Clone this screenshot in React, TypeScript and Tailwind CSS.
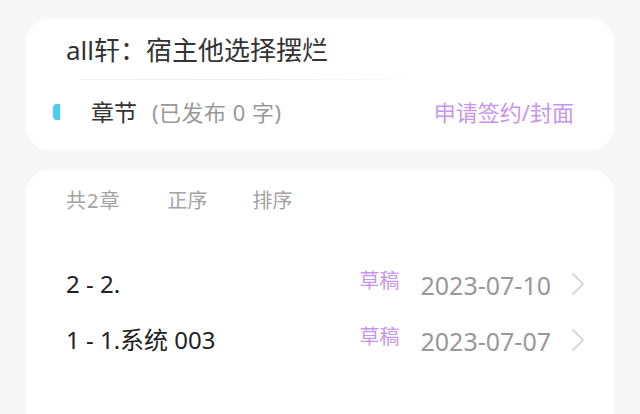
const font = {
  fontFamily: '"Noto Sans", "Noto Sans CJK SC", sans-serif',
};

function Chevron() {
  return (
    <svg width="14" height="24" viewBox="0 0 14 24" fill="none">
      <path
        d="M2 2 L12 12 L2 22"
        stroke="#d9d9d9"
        strokeWidth="2.2"
        strokeLinecap="round"
        strokeLinejoin="round"
      />
    </svg>
  );
}

function App() {
  const chapters = [
    { title: "2 - 2.", date: "2023-07-10" },
    { title: "1 - 1.系统 003", date: "2023-07-07" },
  ];

  return (
    <div
      className="min-h-screen bg-[#f7f7f7] px-[26px] pt-[19px] overflow-hidden"
      style={font}
    >
      <div className="bg-white rounded-[24px] h-[131px]">
        <div className="pl-[40px] pt-[16px] text-[26px] leading-[30px] text-[#333]">
          all轩：宿主他选择摆烂
        </div>
        <div className="ml-[54px] mr-[184px] mt-[14px] h-[1px] bg-gradient-to-r from-[#f0f0f0] via-[#ececec] to-transparent"></div>
        <div className="flex items-center justify-between pl-[27px] pr-[40px] mt-[12px] h-[40px]">
          <div className="flex items-center">
            <span className="w-[7px] h-[16px] rounded-l-[4px] bg-[#45cff2]"></span>
            <span className="ml-[31px] text-[23px] text-[#333]">章节</span>
            <span className="ml-[15px] text-[22px] tracking-[0.5px] text-[#999]">(已发布 0 字)</span>
          </div>
          <span className="text-[22px] text-[#c795ef]">申请签约/封面</span>
        </div>
      </div>

      <div className="bg-white rounded-t-[24px] mt-[20px] h-[300px]">
        <div className="flex items-center pl-[40px] pt-[16px] h-[46px] text-[20px] leading-[30px] text-[#a3a3a3]">
          <span className="tracking-[1px]">共2章</span>
          <span className="ml-[47px]">正序</span>
          <span className="ml-[45px]">排序</span>
        </div>
        <div className="mt-[40px]">
          {chapters.map((c, i) => (
            <div
              key={i}
              className="flex items-center justify-between pl-[40px] pr-[29px] h-[56px]"
            >
              <span className="text-[24px] text-[#222]">{c.title}</span>
              <div className="flex items-center">
                <span className="text-[20px] text-[#c795ef] -mt-[6px]">草稿</span>
                <span className="ml-[21px] text-[25px] text-[#999] mt-[4px]">{c.date}</span>
                <span className="ml-[20px] flex">
                  <Chevron />
                </span>
              </div>
            </div>
          ))}
        </div>
      </div>
    </div>
  );
}

export default App;
